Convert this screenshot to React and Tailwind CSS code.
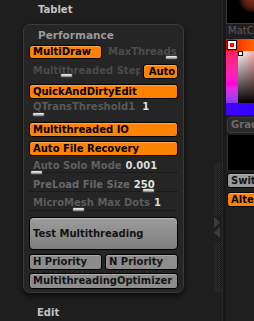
import React from "react";

function OBtn({ children, className = "" }) {
  return (
    <div
      className={`flex items-center overflow-hidden whitespace-nowrap rounded-[3px] border border-black bg-[#ff8204] pl-[3px] text-[10px] font-bold leading-[10px] text-black shadow-[inset_0_1px_0_rgba(255,220,160,0.45)] ${className}`}
    >
      {children}
    </div>
  );
}

function GBtn({ children, className = "" }) {
  return (
    <div
      className={`flex items-center overflow-hidden whitespace-nowrap rounded-[3px] border border-black bg-[#8d8d8d] pl-[3px] text-[10px] font-bold leading-[10px] text-[#141414] shadow-[inset_0_1px_0_rgba(255,255,255,0.25)] ${className}`}
    >
      {children}
    </div>
  );
}

function Thumb({ className = "" }) {
  return (
    <div
      className={`absolute h-[5px] w-[13px] rounded-[2px] border border-[#3a3a3a] bg-linear-to-b from-[#f4f4f4] via-[#c8c8c8] to-[#7c7c7c] ${className}`}
    />
  );
}

function Track({ className = "" }) {
  return <div className={`absolute left-0 right-0 h-px bg-[#1a1a1a] ${className}`} />;
}

export default function App() {
  return (
    <div className="flex h-[321px] w-[254px] overflow-hidden bg-[#1e1e1e] font-['DejaVu_Sans',sans-serif]">
      {/* left column */}
      <div className="flex w-[213px] shrink-0 flex-col">
        <div className="h-[24px] pl-[38px] pt-[5px] text-[10px] font-bold leading-[10px] text-[#c4c4c4]">
          Tablet
        </div>

        <div className="ml-[23px] w-[161px] rounded-[7px] border border-[#3a3a3a] bg-[#252525] shadow-[0_3px_5px_rgba(0,0,0,0.6)]">
          <div className="flex h-[19px] items-center pl-[14px] text-[10.5px] font-bold leading-[10px] text-[#9a9a9a]">
            Performance
          </div>

          <div className="flex flex-col px-[5px] pb-[3px]">
            {/* row 1 */}
            <div className="flex h-[19px] items-start">
              <OBtn className="mt-[1px] h-[14px] w-[73px]">MultiDraw</OBtn>
              <div className="relative ml-[6px] h-[19px] flex-1 overflow-hidden whitespace-nowrap pt-[3px] text-[10px] font-bold leading-[10px] text-[#4c4c4c]">
                MaxThreads
                <Thumb className="left-[57px] top-[11px]" />
              </div>
            </div>

            {/* row 2 */}
            <div className="flex h-[19px] items-start">
              <div className="relative h-[19px] w-[111px] overflow-hidden whitespace-nowrap pl-[4px] pt-[3px] text-[10px] font-bold leading-[10px] text-[#4a4a4a]">
                Multithreaded Step
                <Thumb className="left-[31px] top-[10px]" />
              </div>
              <OBtn className="ml-[3px] mt-[1px] h-[15px] w-[35px] justify-center pl-0">Auto</OBtn>
            </div>

            {/* row 3 */}
            <div className="h-[19px] pt-[2px]">
              <OBtn className="h-[15px]">QuickAndDirtyEdit</OBtn>
            </div>

            {/* row 4 */}
            <div className="relative h-[19px] whitespace-nowrap pl-[4px] pt-[1px] text-[10px] font-bold leading-[10px]">
              <span className="text-[#585858]">QTransThreshold1</span>
              <span className="ml-[7px] text-[#dcdcdc]">1</span>
              <Thumb className="left-[3px] top-[11px]" />
            </div>

            {/* row 5 */}
            <div className="h-[19px] pt-[2px]">
              <OBtn className="h-[15px]">Multithreaded IO</OBtn>
            </div>

            {/* row 6 */}
            <div className="h-[19px] pt-[2px]">
              <OBtn className="h-[15px]">Auto File Recovery</OBtn>
            </div>

            {/* row 7 */}
            <div className="relative h-[19px] whitespace-nowrap pl-[4px] pt-[3px] text-[10px] font-bold leading-[10px]">
              <Track className="top-[14px]" />
              <span className="relative text-[#606060]">Auto Solo Mode</span>
              <span className="relative ml-[4px] text-[#dcdcdc]">0.001</span>
              <Thumb className="left-[1px] top-[12px]" />
            </div>

            {/* row 8 */}
            <div className="relative h-[19px] whitespace-nowrap pl-[4px] pt-[3px] text-[10px] font-bold leading-[10px]">
              <Track className="top-[14px]" />
              <span className="relative text-[#686868]">PreLoad File Size</span>
              <span className="relative ml-[4px] text-[#e2e2e2]">250</span>
              <Thumb className="left-[113px] top-[11px]" />
            </div>

            {/* row 9 */}
            <div className="relative h-[19px] whitespace-nowrap pl-[4px] pt-[2px] text-[10px] font-bold leading-[10px]">
              <Track className="top-[14px]" />
              <span className="relative text-[#5c5c5c]">MicroMesh Max Dots</span>
              <span className="relative ml-[4px] text-[#dcdcdc]">1</span>
              <Thumb className="left-[43px] top-[11px]" />
            </div>

            {/* big button */}
            <div className="mt-[2px] flex h-[33px] items-center rounded-[4px] border border-black bg-linear-to-b from-[#9c9c9c] to-[#7e7e7e] pl-[3px] text-[10px] font-bold leading-[10px] text-[#141414] shadow-[inset_0_1px_0_rgba(255,255,255,0.3)]">
              Test Multithreading
            </div>

            <div className="mt-[4px] flex h-[16px] gap-[3px]">
              <GBtn className="h-[16px] w-[73px]">H Priority</GBtn>
              <GBtn className="h-[16px] w-[73px]">N Priority</GBtn>
            </div>

            <GBtn className="mt-[3px] h-[16px]">MultithreadingOptimizer</GBtn>
          </div>
        </div>

        <div className="mt-[15px] pl-[37px] text-[10px] font-bold leading-[10px] text-[#c4c4c4]">
          Edit
        </div>
      </div>

      {/* scrollbar column */}
      <div className="flex w-[9px] shrink-0 flex-col pl-[1px] pt-[163px]">
        <div className="h-[52px] w-[7px] bg-[repeating-conic-gradient(#2e2e2e_0%_25%,#1a1a1a_0%_50%)] bg-[length:2px_2px]" />
        <svg className="mt-[2px]" width="7" height="21" viewBox="0 0 7 21">
          <polygon points="0,0 6,5.5 0,11" fill="#3c3c3c" />
          <polygon points="6,10 0,15.5 6,21" fill="#3c3c3c" />
        </svg>
        <div className="mt-[4px] h-[50px] w-[7px] bg-[repeating-conic-gradient(#2e2e2e_0%_25%,#1a1a1a_0%_50%)] bg-[length:2px_2px]" />
      </div>

      {/* divider */}
      <div className="w-[4px] shrink-0 border-l border-[#272727] bg-[#191919]" />

      {/* right column */}
      <div className="flex w-[28px] shrink-0 flex-col overflow-hidden bg-[#1f1f1f]">
        <div className="h-[24px] w-[40px] shrink-0 border-b border-l border-[#3a3a3a] bg-[radial-gradient(circle_at_26px_-2px,#7c3020_0px,#5a2014_9px,#2a0d08_13px,#000_15px)]" />
        <div className="h-[15px] shrink-0 overflow-hidden whitespace-nowrap pl-[2px] pt-[2px] text-[10px] leading-[10px] text-[#5a5a5a]">
          MatCap
        </div>

        <div className="relative h-[76px] w-[64px] shrink-0 bg-linear-to-b from-[#ff0000] via-[#ff00e0] via-60% to-[#3000ff]">
          <div className="h-[12px] bg-linear-to-r from-[#ff0000] from-10% to-[#ff7000] to-50%" />
          <div className="ml-[12px] h-[52px] w-[52px] bg-[linear-gradient(to_bottom,transparent,#000),linear-gradient(to_right,#fff,#f00)]" />
          <div className="h-[12px] bg-linear-to-r from-[#4000ff] to-[#2000ff]" />
          <div className="absolute left-[2px] top-[2px] h-[8px] w-[8px] border-2 border-white bg-[#ff0000] outline outline-1 outline-black" />
          <div className="absolute left-[12px] top-[12px] h-[5px] w-[5px] border border-black bg-white" />
        </div>

        <div className="ml-[1px] mt-[2px] flex h-[16px] w-[40px] shrink-0 items-center rounded-[3px] border border-[#3a3a3a] bg-[#2a2a2a] pl-[3px] text-[10px] font-bold leading-[10px] text-[#6a6a6a]">
          Grad
        </div>

        <div className="ml-[1px] mt-[2px] h-[35px] w-[40px] shrink-0 border-l border-[#2e2e2e] bg-black" />

        <GBtn className="ml-[1px] mt-[3px] h-[15px] w-[40px] shrink-0 bg-[#9a9a9a]">Swit</GBtn>
        <OBtn className="ml-[1px] mt-[4px] h-[15px] w-[40px] shrink-0">Alte</OBtn>
      </div>
    </div>
  );
}
